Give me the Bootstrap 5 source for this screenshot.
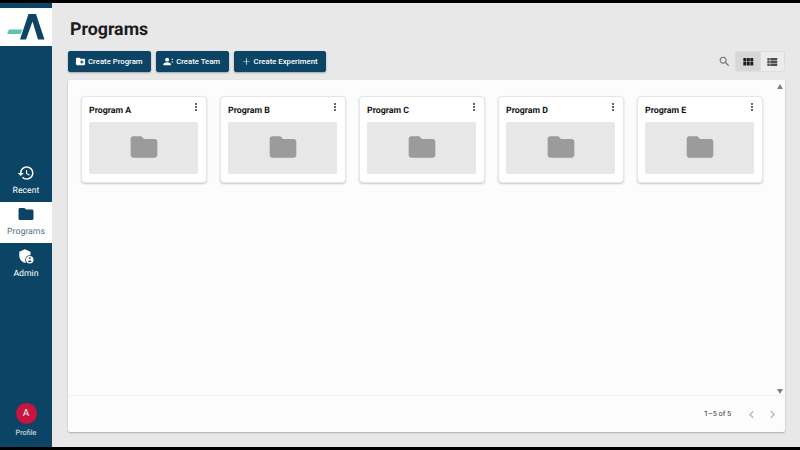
<!DOCTYPE html>
<html lang="en">
<head>
    <meta charset="UTF-8">
    <meta name="viewport" content="width=device-width, initial-scale=1.0">
    <title>Programs</title>
    <link href="https://cdn.jsdelivr.net/npm/bootstrap@5.3.3/dist/css/bootstrap.min.css" rel="stylesheet">
    <style>
        html, body { height: 100%; }
        body {
            background: #000;
            font-family: Roboto, "Liberation Sans", sans-serif;
            text-rendering: geometricPrecision;
            padding: 3px 0;
            overflow: hidden;
        }
        .app-shell { height: 444px; background: #e8e8e9; }

        /* Sidebar */
        .side-rail { width: 52px; background: #0b4464; color: #fff; padding-top: 5px; }
        .logo-box { height: 38px; background: #fff; margin-bottom: 115px; }
        .rail-item { height: 41px; color: #fff; font-size: 8.7px; line-height: 12px; padding-top: 3px; }
        .rail-item svg { width: 18px; height: 18px; fill: currentColor; margin-bottom: 2.5px; }
        .rail-item.is-active { background: #fff; color: #0b4464; }
        .rail-item.is-active span { color: #55707f; }
        .rail-item.is-low { padding-top: 4px; }
        .profile-box { font-size: 7.3px; line-height: 10px; padding-bottom: 9px; color: #e4edf2; }
        .avatar { width: 21px; height: 21px; background: #c9143f; font-size: 10px; margin-bottom: 4px; color: #fff; }

        /* Header */
        .main-area { padding: 0 15px 15px 16px; min-width: 0; }
        .page-title { font-size: 17.8px; font-weight: 700; line-height: 22px; color: #1b1b1d; margin: 16px 0 10px 2px; }
        .action-row { gap: 5px; }
        .action-btn {
            --bs-btn-bg: #0b4464; --bs-btn-border-color: #0b4464; --bs-btn-color: #fff;
            --bs-btn-hover-bg: #0b4464; --bs-btn-hover-border-color: #0b4464; --bs-btn-hover-color: #fff;
            height: 21px; font-size: 7.75px; font-weight: 500; padding: 0 7.5px 0 6px; border-radius: 2px;
            column-gap: 2px;
            box-shadow: 0 1px 2px rgba(0, 0, 0, .3);
        }
        .action-btn svg { width: 11px; height: 11px; fill: #fff; }
        .tools-row { height: 21px; margin-bottom: 8px; }
        .search-icon { width: 13px; height: 13px; fill: #6a6a6a; margin-right: 4px; }
        .view-btn { width: 25.5px; height: 21px; padding: 0; border: 1px solid #dedede; border-radius: 2px; background: #ececed; }
        .view-btn svg { width: 14px; height: 14px; fill: #4e4e50; }
        .view-btn.is-on { background: #d7d7d8; }
        .view-btn.is-on svg { fill: #1c1c1e; }

        /* Panel and cards */
        .list-panel { background: #fdfcfd; border-radius: 2px; box-shadow: 0 1px 2px rgba(0, 0, 0, .25); min-height: 0; }
        .panel-body { min-height: 0; }
        .grid-area { padding: 16px 0 0 13px; gap: 13px; }
        .program-tile { width: 126px; height: 87px; border: 1px solid #e6e6e6; border-radius: 4px; background: #fff; box-shadow: 0 1px 2px rgba(0, 0, 0, .2); padding: 0 8px 0 7px; }
        .tile-name { font-size: 8.8px; font-weight: 700; color: #111; line-height: 11px; margin-top: 8.5px; }
        .tile-menu { width: 12px; height: 12px; fill: #444; margin: 4px -4px 0 0; }
        .tile-thumb { height: 52px; background: #e7e7e8; border-radius: 2px; margin-top: 5.5px; }
        .tile-thumb svg { width: 32px; height: 32px; fill: #9b9b9b; margin-bottom: 2px; }
        .scroll-track { width: 10px; padding: 4px 0 1px; }
        .arrow-up { border: 3.5px solid transparent; border-top: 0; border-bottom: 5px solid #808080; }
        .arrow-down { border: 3.5px solid transparent; border-bottom: 0; border-top: 5px solid #808080; }
        .list-footer { height: 37px; border-top: 1px solid #f0f0f0; font-size: 7.2px; color: #333; padding-right: 5px; }
        .page-arrow { width: 15px; height: 15px; fill: #b4b4b4; margin-left: 6px; }
        .page-count { margin-right: 7px; }
    </style>
</head>
<body>
    <div class="app-shell d-flex">
        <!-- Sidebar -->
        <nav class="side-rail d-flex flex-column flex-shrink-0">
            <div class="logo-box d-flex align-items-center justify-content-center">
                <svg width="52" height="38" viewBox="0 0 52 38">
                    <polygon points="9,21.5 22.5,21.5 20.5,26 7,26" fill="#5cc4b6"/>
                    <polygon points="28.5,6 36,6 44.5,31.5 38,31.5 32.5,13.5 26,31.5 20,31.5" fill="#0b4464"/>
                </svg>
            </div>
            <a class="rail-item d-flex flex-column align-items-center text-decoration-none" href="#">
                <svg viewBox="0 0 24 24"><path d="M13 3c-4.97 0-9 4.03-9 9H1l3.89 3.89.07.14L9 12H6c0-3.87 3.13-7 7-7s7 3.13 7 7-3.13 7-7 7c-1.93 0-3.68-.79-4.94-2.06l-1.42 1.42C8.27 19.99 10.51 21 13 21c4.97 0 9-4.03 9-9s-4.03-9-9-9zm-1 5v5l4.28 2.54.72-1.21-3.5-2.08V8H12z"/></svg>
                <span>Recent</span>
            </a>
            <a class="rail-item is-active d-flex flex-column align-items-center text-decoration-none" href="#">
                <svg viewBox="0 0 24 24"><path d="M10 4H4c-1.1 0-1.99.9-1.99 2L2 18c0 1.1.9 2 2 2h16c1.1 0 2-.9 2-2V8c0-1.1-.9-2-2-2h-8l-2-2z"/></svg>
                <span>Programs</span>
            </a>
            <a class="rail-item is-low d-flex flex-column align-items-center text-decoration-none" href="#">
                <svg viewBox="0 0 24 24"><path d="M17 11c.34 0 .67.04 1 .09V6.27L10.5 3 3 6.27v4.91c0 4.54 3.2 8.79 7.5 9.82.55-.13 1.08-.32 1.6-.55-.69-.98-1.1-2.17-1.1-3.45 0-3.31 2.69-6 6-6z"/><path fill-rule="evenodd" d="M17 12a5 5 0 1 0 0 10 5 5 0 0 0 0-10zm0 1.5a1.3 1.3 0 1 1 0 2.6 1.3 1.3 0 0 1 0-2.6zm0 6.9c-1 0-2-.5-2.5-1.3.1-.8 1.7-1.2 2.5-1.2s2.4.4 2.5 1.2c-.5.8-1.5 1.3-2.5 1.3z"/></svg>
                <span>Admin</span>
            </a>
            <div class="flex-grow-1"></div>
            <div class="profile-box d-flex flex-column align-items-center">
                <div class="avatar rounded-circle d-flex align-items-center justify-content-center">A</div>
                <span>Profile</span>
            </div>
        </nav>

        <!-- Main -->
        <main class="main-area flex-grow-1 d-flex flex-column">
            <h1 class="page-title">Programs</h1>
            <div class="tools-row d-flex align-items-center">
                <div class="action-row d-flex">
                    <button class="btn action-btn d-flex align-items-center" type="button">
                        <svg viewBox="0 0 24 24"><path d="M20 6h-8l-2-2H4c-1.11 0-1.99.89-1.99 2L2 18c0 1.11.89 2 2 2h16c1.11 0 2-.89 2-2V8c0-1.11-.89-2-2-2zm-1 8h-3v3h-2v-3h-3v-2h3V9h2v3h3v2z"/></svg>
                        <span>Create Program</span>
                    </button>
                    <button class="btn action-btn d-flex align-items-center" type="button">
                        <svg viewBox="0 0 24 24"><circle cx="9" cy="8" r="4.2"/><path d="M1 20v-2.2C1 15 6 13.5 9 13.5s8 1.500 8 4.300V20H1z"/><path d="M19 6h2.500v2.500H19zM19 12h2.500v2.500H19z"/></svg>
                        <span>Create Team</span>
                    </button>
                    <button class="btn action-btn d-flex align-items-center" type="button">
                        <svg viewBox="0 0 24 24"><path d="M19 12.8h-6.200V19h-1.600v-6.200H5v-1.600h6.200V5h1.600v6.200H19z"/></svg>
                        <span>Create Experiment</span>
                    </button>
                </div>
                <div class="ms-auto d-flex align-items-center">
                    <svg class="search-icon" viewBox="0 0 24 24"><path d="M15.500 14h-.79l-.28-.27C15.410 12.590 16 11.110 16 9.500 16 5.910 13.090 3 9.500 3S3 5.910 3 9.500 5.910 16 9.500 16c1.610 0 3.090-.59 4.230-1.570l.27.28v.79l5 4.990L20.490 19l-4.990-5zm-6 0C7.010 14 5 11.990 5 9.500S7.010 5 9.500 5 14 7.010 14 9.500 11.990 14 9.500 14z"/></svg>
                    <div class="btn-group">
                        <button class="btn view-btn is-on d-flex align-items-center justify-content-center" type="button">
                            <svg viewBox="0 0 24 24"><path d="M4 11h5V5H4v6zm0 7h5v-6H4v6zm6 0h5v-6h-5v6zm6 0h5v-6h-5v6zm-6-7h5V5h-5v6zm6-6v6h5V5h-5z"/></svg>
                        </button>
                        <button class="btn view-btn d-flex align-items-center justify-content-center" type="button">
                            <svg viewBox="0 0 24 24"><path d="M4 14h4v-4H4v4zm0 5h4v-4H4v4zM4 9h4V5H4v4zm5 5h12v-4H9v4zm0 5h12v-4H9v4zM9 5v4h12V5H9z"/></svg>
                        </button>
                    </div>
                </div>
            </div>

            <section class="list-panel flex-grow-1 d-flex flex-column">
                <div class="panel-body flex-grow-1 d-flex">
                    <div class="grid-area flex-grow-1 d-flex align-items-start" id="tiles"></div>
                    <div class="scroll-track d-flex flex-column justify-content-between align-items-center">
                        <div class="arrow-up"></div>
                        <div class="arrow-down"></div>
                    </div>
                </div>
                <div class="list-footer d-flex align-items-center justify-content-end">
                    <span class="page-count">1–5 of 5</span>
                    <svg class="page-arrow" viewBox="0 0 24 24"><path d="M15.410 7.410 14 6l-6 6 6 6 1.410-1.410L10.830 12z"/></svg>
                    <svg class="page-arrow" viewBox="0 0 24 24"><path d="M10 6 8.590 7.410 13.170 12l-4.580 4.590L10 18l6-6z"/></svg>
                </div>
            </section>
        </main>
    </div>

    <script src="https://cdn.jsdelivr.net/npm/bootstrap@5.3.3/dist/js/bootstrap.bundle.min.js"></script>
    <script>
        const tiles = document.getElementById('tiles');
        ['A', 'B', 'C', 'D', 'E'].forEach((letter) => {
            tiles.insertAdjacentHTML('beforeend', `
                <div class="program-tile flex-shrink-0">
                    <div class="d-flex justify-content-between align-items-start">
                        <div class="tile-name">Program ${letter}</div>
                        <svg class="tile-menu" viewBox="0 0 24 24"><path d="M12 8c1.100 0 2-.9 2-2s-.9-2-2-2-2 .9-2 2 .9 2 2 2zm0 2c-1.100 0-2 .9-2 2s.9 2 2 2 2-.9 2-2-.9-2-2-2zm0 6c-1.100 0-2 .9-2 2s.9 2 2 2 2-.9 2-2-.9-2-2-2z"/></svg>
                    </div>
                    <div class="tile-thumb d-flex align-items-center justify-content-center">
                        <svg viewBox="0 0 24 24"><path d="M10 4H4c-1.100 0-1.990.9-1.990 2L2 18c0 1.100.9 2 2 2h16c1.100 0 2-.9 2-2V8c0-1.100-.9-2-2-2h-8l-2-2z"/></svg>
                    </div>
                </div>`);
        });
    </script>
</body>
</html>
